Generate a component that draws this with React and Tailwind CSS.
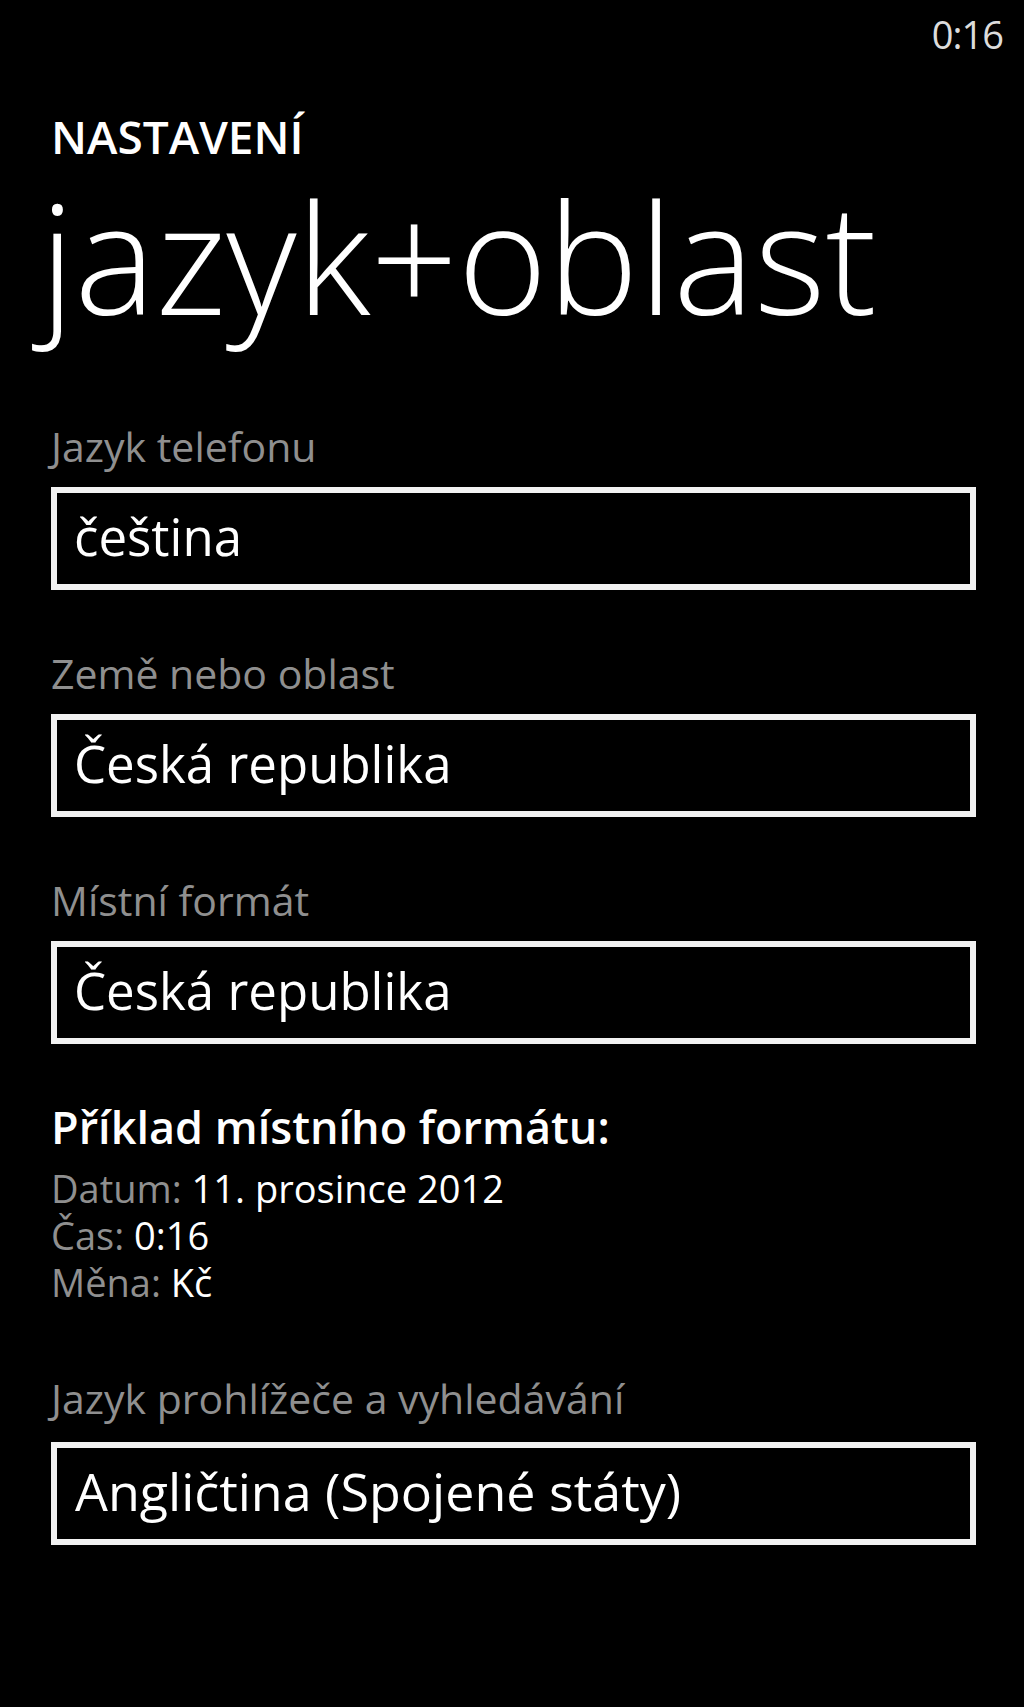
const font = { fontFamily: '"Open Sans", "Noto Sans", sans-serif' };

const Picker = ({ label, value, className = "" }) => (
  <div className={className}>
    <p className="text-[41px] leading-[42px] text-[#8f8f8f]">{label}</p>
    <div className="mt-[20px] h-[103px] border-[6px] border-[#f2f2f2] pl-[17px]">
      <p className="text-[51px] leading-[86px] text-white whitespace-nowrap">{value}</p>
    </div>
  </div>
);

const Sample = ({ name, value }) => (
  <p className="text-[38px] leading-[47px]">
    <span className="text-[#8f8f8f]">{name}</span>{" "}
    <span className="text-white">{value}</span>
  </p>
);

export default function App() {
  return (
    <div className="w-[1024px] h-[1707px] bg-black overflow-hidden" style={font}>
      <div className="flex justify-end pr-[21px] pt-[5px]">
        <span className="text-[38px] leading-[58px] tracking-[-1px] text-[#dcdcdc]">0:16</span>
      </div>

      <div className="pl-[51px] pr-[48px]">
        <p className="mt-[50px] text-[46px] leading-[46px] font-semibold text-white">NASTAVENÍ</p>
        <h1 className="mt-[22px] -ml-[11px] text-[153px] leading-[150px] font-light text-white whitespace-nowrap">
          jazyk+oblast
        </h1>

        <Picker className="mt-[94px]" label="Jazyk telefonu" value="čeština" />
        <Picker className="mt-[62px]" label="Země nebo oblast" value="Česká republika" />
        <Picker className="mt-[62px]" label="Místní formát" value="Česká republika" />

        <div className="mt-[59px]">
          <p className="text-[45px] leading-[48px] font-semibold text-white">Příklad místního formátu:</p>
          <div className="mt-[14px]">
            <Sample name="Datum:" value="11. prosince 2012" />
            <Sample name="Čas:" value="0:16" />
            <Sample name="Měna:" value="Kč" />
          </div>
        </div>

        <div className="mt-[71px]">
          <p className="text-[41px] leading-[42px] text-[#8f8f8f]">Jazyk prohlížeče a vyhledávání</p>
          <div className="mt-[23px] h-[103px] border-[6px] border-[#f2f2f2] pl-[18px]">
            <p className="text-[52px] leading-[86px] text-white whitespace-nowrap">Angličtina (Spojené státy)</p>
          </div>
        </div>
      </div>
    </div>
  );
}
